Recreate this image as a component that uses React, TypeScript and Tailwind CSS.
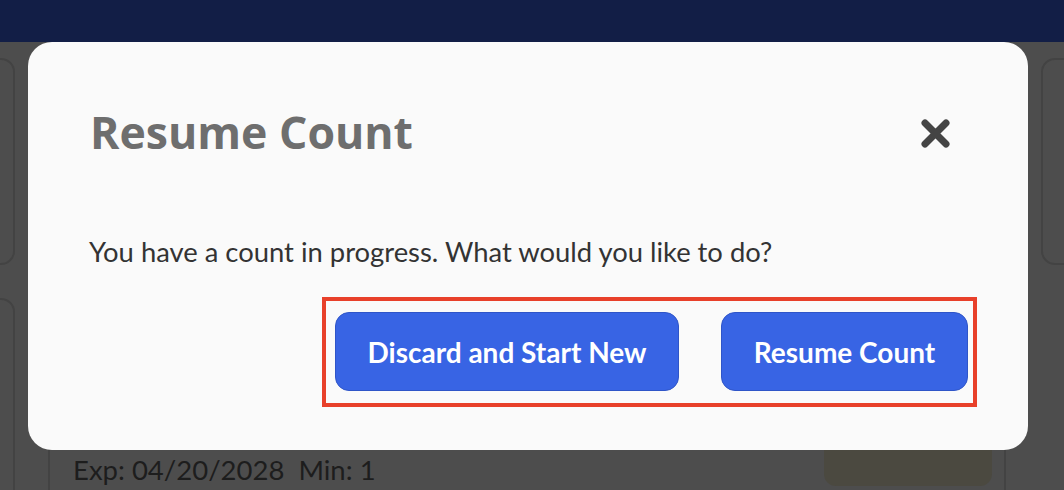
import React from "react";

export default function App() {
  return (
    <div className="relative w-[1064px] h-[490px] overflow-hidden bg-[#4d4d4d] font-['Lato',sans-serif]">
      {/* top nav */}
      <div className="h-[42px] bg-[#121e46]" />

      {/* dimmed page content */}
      <div className="flex flex-col gap-[33px] pt-[16px] mx-[-100px]">
        <div className="flex justify-between">
          <div className="w-[115px] h-[207px] rounded-[14px] border-2 border-[#434343]" />
          <div className="w-[123px] h-[207px] rounded-[14px] border-2 border-[#434343]" />
        </div>
        <div className="flex gap-[33px]">
          <div className="w-[115px] h-[260px] rounded-[14px] border-2 border-[#434343]" />
          <div className="w-[958px] h-[260px] rounded-[14px] border-2 border-[#434343] flex flex-col justify-end pl-[23px] pr-[12px] pb-[71px]">
            <div className="flex justify-between items-end">
              <span className="text-[27.5px] leading-[30px] text-[#1d1d1d]">Exp: 04/20/2028&nbsp;&nbsp;Min: 1</span>
              <div className="w-[168px] h-[60px] rounded-[12px] bg-[#4b4940] mb-[-1px]" />
            </div>
          </div>
        </div>
      </div>

      {/* modal */}
      <div className="absolute left-[28px] top-[42px] w-[1000px] h-[408px] rounded-[24px] bg-[#fafafa] flex flex-col">
        <div className="flex items-center justify-between pl-[62px] pr-[78px] pt-[60px]">
          <h2 className="font-['Open_Sans',sans-serif] font-bold text-[44.6px] leading-[60px] text-[#6e6e6e]">Resume Count</h2>
          <svg width="29" height="29" viewBox="0 0 29 29" className="mt-[3px]">
            <path d="M4 4 L25 25 M25 4 L4 25" stroke="#444444" strokeWidth="7" strokeLinecap="round" />
          </svg>
        </div>
        <p className="pl-[61px] mt-[75px] text-[27.4px] leading-[30px] text-[#333333]">
          You have a count in progress. What would you like to do?
        </p>
        <div className="flex justify-end pr-[51px] mt-[30px]">
          <div className="flex gap-[42px] border-4 border-[#e8402a] pl-[9px] pr-[5px] pt-[11px] pb-[12px]">
            <button className="h-[79px] w-[344px] rounded-[14px] bg-[#3864e4] border border-[#2f55c8] text-white font-bold text-[28px]">
              Discard and Start New
            </button>
            <button className="h-[79px] w-[247px] rounded-[14px] bg-[#3864e4] border border-[#2f55c8] text-white font-bold text-[28px]">
              Resume Count
            </button>
          </div>
        </div>
      </div>
    </div>
  );
}
